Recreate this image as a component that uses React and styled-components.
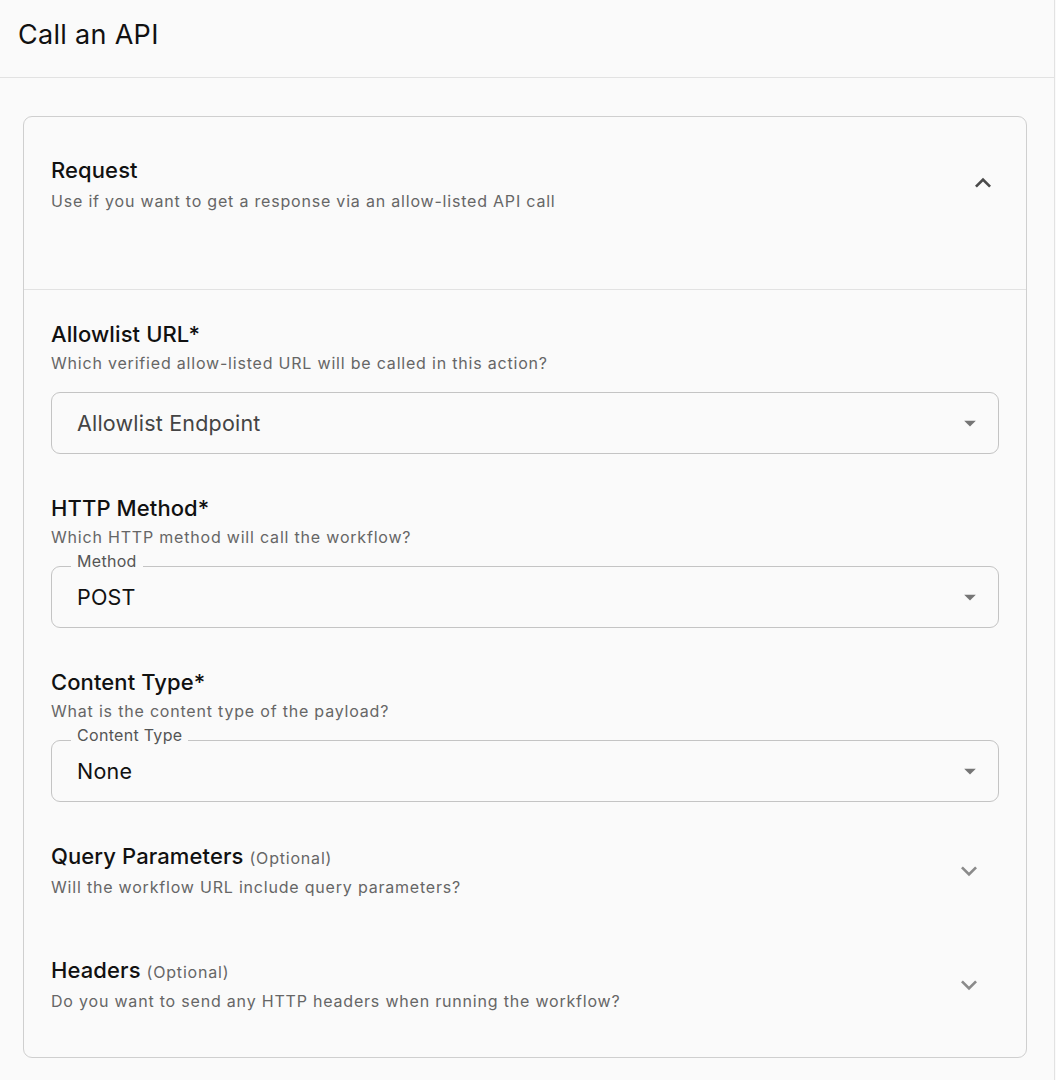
import React from "react";
import styled, { createGlobalStyle } from "styled-components";

const GlobalStyle = createGlobalStyle`
  html, body {
    margin: 0;
    padding: 0;
    background: #fafafa;
  }
  body {
    font-family: Inter, "Noto Sans", "Liberation Sans", sans-serif;
    color: #111;
  }
`;

const Page = styled.div`
  width: 1055px;
  min-height: 1080px;
  border-right: 1px solid #e2e2e2;
  background: #fafafa;
  box-sizing: border-box;
`;

const TopBar = styled.header`
  height: 77px;
  border-bottom: 1px solid #e2e2e2;
  display: flex;
  align-items: center;
  padding: 0 18px;
`;

const PageTitle = styled.h1`
  margin: 0 0 8px;
  font-size: 27px;
  font-weight: 400;
  color: #111;
  letter-spacing: 0.3px;
`;

const Body = styled.main`
  padding: 38px 27px 20px 23px;
`;

const Card = styled.section`
  border: 1px solid #cfcfcf;
  border-radius: 9px;
  background: #fafafa;
`;

const CardHead = styled.div`
  height: 173px;
  box-sizing: border-box;
  padding: 39px 27px 0 27px;
  display: flex;
  align-items: flex-start;
  justify-content: space-between;
  border-bottom: 1px solid #e2e2e2;
`;

const CardBody = styled.div`
  padding: 30px 27px 44px;
  display: flex;
  flex-direction: column;
`;

const Heading = styled.h2`
  margin: 0;
  font-size: 22px;
  line-height: 28px;
  font-weight: 500;
  color: #111;
  letter-spacing: 0.1px;
`;

const Optional = styled.span`
  font-size: 16px;
  font-weight: 400;
  color: #666;
  margin-left: 6px;
  letter-spacing: 0.8px;
`;

const Hint = styled.p`
  margin: ${(p) => p.$top ?? 3}px 0 0;
  font-size: 16px;
  line-height: 24px;
  color: #666;
  letter-spacing: 0.8px;
`;

const Section = styled.div`
  display: flex;
  flex-direction: column;
  margin-bottom: 40px;
`;

const FieldBox = styled.div`
  position: relative;
  margin-top: 17px;
  height: 62px;
  box-sizing: border-box;
  border: 1px solid #c4c4c4;
  border-radius: 9px;
  display: flex;
  align-items: center;
  justify-content: space-between;
  padding: 0 14px 0 25px;
`;

const FloatLabel = styled.span`
  position: absolute;
  top: -18px;
  left: 19px;
  padding: 0 6px;
  background: #fafafa;
  font-size: 16px;
  line-height: 24px;
  color: #555;
  letter-spacing: 0.3px;
`;

const Value = styled.span`
  font-size: 21.5px;
  color: ${(p) => (p.$placeholder ? "#444" : "#111")};
  letter-spacing: 0.2px;
`;

const Accordion = styled.div`
  display: flex;
  align-items: center;
  justify-content: space-between;
  padding-right: 14px;
  margin-bottom: ${(p) => p.$gap || 0}px;
`;

const AccordionText = styled.div`
  display: flex;
  flex-direction: column;
`;

const Caret = () => (
  <svg width="28" height="28" viewBox="0 0 24 24" aria-hidden="true">
    <path d="M7 10l5 5 5-5z" fill="#757575" />
  </svg>
);

const Chevron = ({ up, color }) => (
  <svg
    width="32"
    height="32"
    viewBox="0 0 24 24"
    aria-hidden="true"
    style={up ? undefined : { transform: "rotate(180deg)" }}
  >
    <path d="M12 8l-6 6 1.41 1.41L12 10.83l4.59 4.58L18 14z" fill={color} />
  </svg>
);

const ChevronSlot = styled.div`
  margin-top: ${(p) => p.$top || 0}px;
  display: flex;
`;

function SelectField({ label, value, placeholder }) {
  return (
    <FieldBox>
      {label && <FloatLabel>{label}</FloatLabel>}
      <Value $placeholder={placeholder}>{value}</Value>
      <Caret />
    </FieldBox>
  );
}

export default function App() {
  return (
    <>
      <GlobalStyle />
      <Page>
        <TopBar>
          <PageTitle>Call an API</PageTitle>
        </TopBar>
        <Body>
          <Card>
            <CardHead>
              <div>
                <Heading>Request</Heading>
                <Hint $top={5}>Use if you want to get a response via an allow-listed API call</Hint>
              </div>
              <ChevronSlot $top={11}>
                <Chevron up color="#4a4a4a" />
              </ChevronSlot>
            </CardHead>
            <CardBody>
              <Section>
                <Heading>Allowlist URL*</Heading>
                <Hint>Which verified allow-listed URL will be called in this action?</Hint>
                <SelectField value="Allowlist Endpoint" placeholder />
              </Section>
              <Section>
                <Heading>HTTP Method*</Heading>
                <Hint>Which HTTP method will call the workflow?</Hint>
                <SelectField label="Method" value="POST" />
              </Section>
              <Section>
                <Heading>Content Type*</Heading>
                <Hint>What is the content type of the payload?</Hint>
                <SelectField label="Content Type" value="None" />
              </Section>
              <Accordion $gap={57}>
                <AccordionText>
                  <Heading>
                    Query Parameters<Optional>(Optional)</Optional>
                  </Heading>
                  <Hint>Will the workflow URL include query parameters?</Hint>
                </AccordionText>
                <Chevron color="#8a8a8a" />
              </Accordion>
              <Accordion>
                <AccordionText>
                  <Heading>
                    Headers<Optional>(Optional)</Optional>
                  </Heading>
                  <Hint>Do you want to send any HTTP headers when running the workflow?</Hint>
                </AccordionText>
                <Chevron color="#8a8a8a" />
              </Accordion>
            </CardBody>
          </Card>
        </Body>
      </Page>
    </>
  );
}
